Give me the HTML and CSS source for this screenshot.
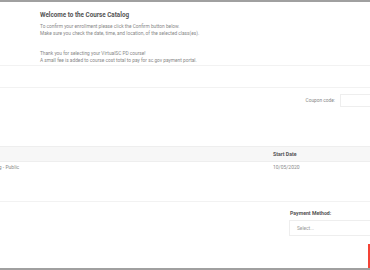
FILE: index.html
```html
<!DOCTYPE html>
<html lang="en">
  <head>
    <meta charset="UTF-8" />
    <meta name="viewport" content="width=device-width, initial-scale=1.0" />
    <title>Course Catalog</title>
    <link rel="stylesheet" href="styles.css">
  </head>
  <body>
    <div class="page">
      <div class="intro">
        <h1>Welcome to the Course Catalog</h1>
        <p>To confirm your enrollment please click the Confirm button below.<br />
          Make sure you check the date, time, and location, of the selected class(es).</p>
        <p>Thank you for selecting your VirtualSC PD course!<br />
          A small fee is added to course cost total to pay for sc.gov payment portal.</p>
      </div>
      <div class="band"></div>
      <div class="coupon">
        <label for="coupon">Coupon code:</label>
        <input type="text" id="coupon" />
      </div>
      <div class="table">
        <div class="thead">
          <div class="col-name"></div>
          <div class="col-date">Start Date</div>
        </div>
        <div class="trow">
          <div class="col-name"><span class="clip">Online Learning - Public</span></div>
          <div class="col-date">10/05/2020</div>
        </div>
      </div>
      <div class="payment">
        <label for="method">Payment Method:</label>
        <div class="select" id="method">Select...</div>
        <div class="actions"><button class="confirm"></button></div>
      </div>
    </div>
  </body>
</html>
```

FILE: styles.css
```css
html,
body {
  margin: 0;
  padding: 0;
}
body {
  font-family: Roboto, "Liberation Sans", sans-serif;
  background: #fff;
  color: #777;
  overflow: hidden;
}
.page {
  height: 266px;
  border-top: 2px solid #a0a0a0;
  border-bottom: 2px solid #a0a0a0;
  overflow: hidden;
}
.intro {
  height: 64px;
  padding-left: 40px;
  box-sizing: border-box;
  padding-top: 9px;
  border-bottom: 1px solid #f2f2f2;
}
h1 {
  margin: 0 0 4px;
  font-size: 6.3px;
  color: #555;
  font-weight: bold;
}
.intro p {
  margin: 0 0 13px;
  font-size: 4.8px;
  line-height: 7px;
  color: #888;
}
.band {
  height: 21px;
  border-bottom: 1px solid #f2f2f2;
}
.coupon {
  display: flex;
  justify-content: flex-end;
  align-items: center;
  gap: 5px;
  margin-top: 6px;
  margin-right: -10px;
}
.coupon label {
  font-size: 4.8px;
  color: #888;
}
.coupon input {
  width: 40px;
  height: 13px;
  padding: 0;
  border: 1px solid #eee;
  box-sizing: border-box;
}
.table {
  margin-top: 39px;
}
.thead,
.trow {
  display: flex;
}
.thead {
  height: 14px;
  align-items: center;
  background: #f7f7f7;
  border-top: 1px solid #eee;
  border-bottom: 1px solid #eee;
  font-size: 5.2px;
  font-weight: bold;
  color: #555;
}
.trow {
  height: 40px;
  padding-top: 2px;
  box-sizing: border-box;
  font-size: 5px;
  color: #8a8a8a;
  border-bottom: 1px solid #f2f2f2;
}
.col-name {
  width: 273px;
  overflow: hidden;
}
.clip {
  display: block;
  margin-left: -33px;
  white-space: nowrap;
}
.col-date {
  flex: 1;
}
.payment {
  margin-left: 289px;
  padding-top: 8px;
}
.payment label {
  display: block;
  margin-left: 1px;
  font-size: 5.2px;
  font-weight: bold;
  color: #555;
}
.select {
  margin-top: 4px;
  width: 100px;
  height: 16px;
  box-sizing: border-box;
  padding-left: 7px;
  line-height: 15px;
  border: 1px solid #eee;
  font-size: 4.8px;
  color: #999;
}
.actions {
  display: flex;
  margin-top: 8px;
  margin-left: 79px;
}
.confirm {
  width: 30px;
  height: 26px;
  border: none;
  padding: 0;
  background: #f44336;
}
```
